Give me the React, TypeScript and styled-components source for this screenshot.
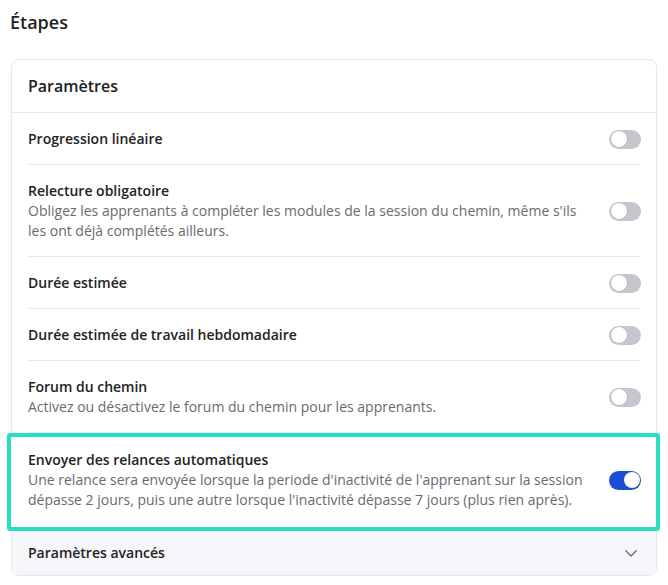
import React, { useState } from 'react'
import styled, { createGlobalStyle } from 'styled-components'

const GlobalStyle = createGlobalStyle`
  html, body {
    margin: 0;
    padding: 0;
    background: #ffffff;
    font-family: "Open Sans", "Noto Sans", sans-serif;
    color: #222222;
  }
`

const Page = styled.div`
  padding: 10px 11px 8px 11px;
`

const Heading = styled.h2`
  margin: 0 0 0 -1px;
  font-size: 18px;
  line-height: 24px;
  font-weight: 600;
  color: #1f1f1f;
`

const Card = styled.section`
  margin-top: 25px;
  border: 1px solid #e6e6eb;
  border-radius: 8px;
  background: #ffffff;
`

const CardHeader = styled.div`
  display: flex;
  align-items: center;
  height: 52px;
  padding: 0 16px;
  border-bottom: 1px solid #e6e6eb;
  font-size: 16px;
  font-weight: 600;
  color: #222222;
`

const List = styled.div`
  display: flex;
  flex-direction: column;
  padding: 0 16px;
`

const Row = styled.div<{ $highlighted?: boolean }>`
  display: flex;
  align-items: center;
  gap: 24px;
  padding: 16px 0 15px;
  border-bottom: 1px solid #e8e8ec;

  ${p => p.$highlighted && `
    margin: 0 -20px 0 -21px;
    padding: 13px 16px 17px 17px;
    border: 4px solid #27dfc2;
    border-radius: 3px;
    background: #ffffff;
  `}
`

const RowText = styled.div`
  flex: 1;
  display: flex;
  flex-direction: column;
`

const RowTitle = styled.div`
  font-size: 14px;
  line-height: 20px;
  font-weight: 600;
  color: #222222;
`

const RowDescription = styled.div`
  font-size: 14px;
  line-height: 20px;
  color: #6a6a6e;
`

const Track = styled.button<{ $on: boolean }>`
  position: relative;
  flex: none;
  width: 32px;
  height: 19px;
  margin-right: -1px;
  padding: 0;
  border: none;
  border-radius: 10px;
  background: ${p => (p.$on ? '#1b4fd8' : '#c6c7ce')};
  cursor: pointer;
`

const Knob = styled.span<{ $on: boolean }>`
  position: absolute;
  top: 1.5px;
  left: ${p => (p.$on ? '14.5px' : '1.5px')};
  width: 16px;
  height: 16px;
  border-radius: 50%;
  background: #ffffff;
  box-shadow: 0 0 0 0.5px rgba(0, 0, 0, 0.15);
`

const Footer = styled.div`
  display: flex;
  align-items: center;
  justify-content: space-between;
  height: 43px;
  padding: 0 16px 1px;
  background: #f7f7fb;
  border-radius: 0 0 8px 8px;
  font-size: 14px;
  font-weight: 600;
  color: #222222;
`

interface ToggleProps {
  on: boolean
  onToggle: () => void
}

function Toggle(props: ToggleProps) {
  return (
    <Track $on={props.on} onClick={props.onToggle} aria-pressed={props.on}>
      <Knob $on={props.on} />
    </Track>
  )
}

interface Setting {
  id: string
  title: string
  description?: string
  highlighted?: boolean
}

const settings: Setting[] = [
  { id: 'progression', title: 'Progression linéaire' },
  {
    id: 'relecture',
    title: 'Relecture obligatoire',
    description:
      "Obligez les apprenants à compléter les modules de la session du chemin, même s'ils les ont déjà complétés ailleurs.",
  },
  { id: 'duree', title: 'Durée estimée' },
  { id: 'hebdo', title: 'Durée estimée de travail hebdomadaire' },
  {
    id: 'forum',
    title: 'Forum du chemin',
    description: 'Activez ou désactivez le forum du chemin pour les apprenants.',
  },
  {
    id: 'relances',
    title: 'Envoyer des relances automatiques',
    description:
      "Une relance sera envoyée lorsque la periode d'inactivité de l'apprenant sur la session dépasse 2 jours, puis une autre lorsque l'inactivité dépasse 7 jours (plus rien après).",
    highlighted: true,
  },
]

export default function App() {
  const [values, setValues] = useState<Record<string, boolean>>({ relances: true })

  const toggle = (id: string) => setValues(v => ({ ...v, [id]: !v[id] }))

  return (
    <>
      <GlobalStyle />
      <Page>
        <Heading>Étapes</Heading>
        <Card>
          <CardHeader>Paramètres</CardHeader>
          <List>
            {settings.map(s => (
              <Row key={s.id} $highlighted={s.highlighted}>
                <RowText>
                  <RowTitle>{s.title}</RowTitle>
                  {s.description && <RowDescription>{s.description}</RowDescription>}
                </RowText>
                <Toggle on={!!values[s.id]} onToggle={() => toggle(s.id)} />
              </Row>
            ))}
          </List>
          <Footer>
            Paramètres avancés
            <svg width="18" height="18" viewBox="0 0 24 24" fill="none" stroke="#6a6a6e" strokeWidth="1.8" strokeLinecap="round" strokeLinejoin="round">
              <path d="M5 9l7 7 7-7" />
            </svg>
          </Footer>
        </Card>
      </Page>
    </>
  )
}
